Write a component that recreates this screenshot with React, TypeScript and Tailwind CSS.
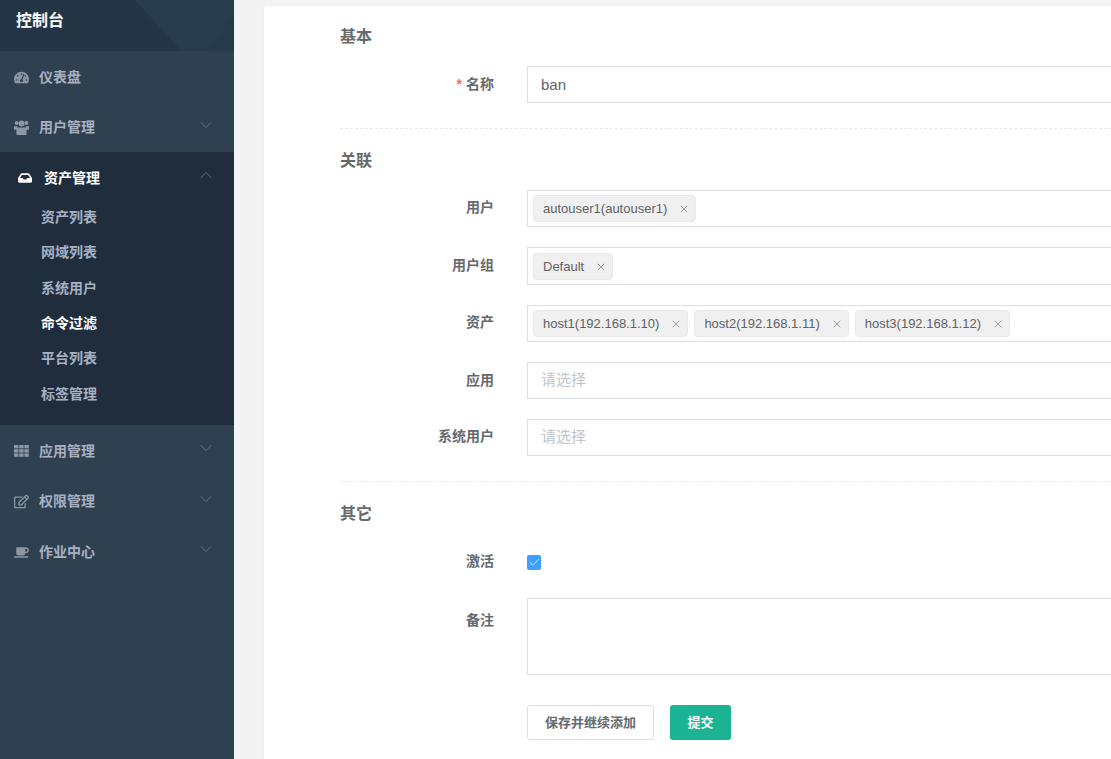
import { ReactNode } from "react";
import { FaTachometerAlt, FaInbox, FaRegEdit, FaCoffee } from "react-icons/fa";
import { LuChevronDown, LuChevronUp, LuCheck, LuX } from "react-icons/lu";

const font = { fontFamily: '"Liberation Sans", "Noto Sans CJK SC", sans-serif' };

function UsersIcon() {
  return (
    <svg width="15" height="15" viewBox="0 0 15 15" fill="currentColor">
      <circle cx="2.6" cy="3" r="2" />
      <circle cx="12.4" cy="3" r="2" />
      <circle cx="7.5" cy="3.6" r="3" />
      <path d="M0 6.200h3.400c-.3 1-.3 2 0 3.500H0z" />
      <path d="M15 6.200h-3.400c.3 1 .3 2 0 3.500H15z" />
      <path d="M3.600 7.500h7.800c1 0 1.200 1 1.200 2.500v4c0 .6-.4 1-1 1H3.400c-.6 0-1-.4-1-1v-4c0-1.500.2-2.500 1.200-2.500z" />
    </svg>
  );
}

function GridIcon() {
  const cells = [0, 1, 2].flatMap((r) => [0, 1, 2].map((c) => ({ r, c })));
  return (
    <svg width="15" height="12" viewBox="0 0 15 12" fill="currentColor">
      {cells.map(({ r, c }) => (
        <rect key={`${r}-${c}`} x={c * 5.2} y={r * 4.2} width="4.4" height="3.4" />
      ))}
    </svg>
  );
}

function MenuItem({ icon, label, arrow = true }: { icon: ReactNode; label: string; arrow?: boolean }) {
  return (
    <div className="flex h-[50.5px] items-center pl-[14px] pr-[18px] pt-[2px] text-[14px] font-bold text-[#a7b1c2]">
      <span className="flex w-[25px] text-[15px] text-[#8d97a3]">{icon}</span>
      <span className="flex-1">{label}</span>
      {arrow && <LuChevronDown className="mb-[6px] text-[20px] text-[#6d7b88]" strokeWidth={1} />}
    </div>
  );
}

function Sidebar() {
  const subs = ["资产列表", "网域列表", "系统用户", "命令过滤", "平台列表", "标签管理"];
  return (
    <aside className="flex w-[234px] shrink-0 flex-col bg-[#2f4050]">
      <div className="relative h-[51px] overflow-hidden bg-[#293c4c] pl-[16px] pt-[11px] text-[16px] font-bold leading-[20px] text-white">
        <svg className="absolute left-0 top-0" width="234" height="51">
          <polygon points="0,0 135,0 181,51 0,51" fill="#243646" />
          <polygon points="234,16 234,51 205,51" fill="#273a4a" />
        </svg>
        <span className="relative">控制台</span>
      </div>
      <MenuItem icon={<FaTachometerAlt />} label="仪表盘" arrow={false} />
      <MenuItem icon={<UsersIcon />} label="用户管理" />
      <div className="h-[273px] bg-[#1f2d3d]">
        <div className="flex h-[50px] items-center pl-[18px] pr-[18px] pt-[2px] text-[14px] font-bold text-white">
          <span className="flex w-[26px] text-[14px]"><FaInbox /></span>
          <span className="flex-1">资产管理</span>
          <LuChevronUp className="mb-[6px] text-[20px] text-[#6d7b88]" strokeWidth={1} />
        </div>
        <div className="-mt-[2px] flex flex-col pl-[41px]">
          {subs.map((s) => (
            <div
              key={s}
              className={`flex h-[35.3px] items-center text-[14px] font-bold ${s === "命令过滤" ? "text-white" : "text-[#a7b1c2]"}`}
            >
              {s}
            </div>
          ))}
        </div>
      </div>
      <MenuItem icon={<GridIcon />} label="应用管理" />
      <MenuItem icon={<FaRegEdit />} label="权限管理" />
      <MenuItem icon={<FaCoffee />} label="作业中心" />
    </aside>
  );
}

function Tag({ text }: { text: string }) {
  return (
    <span className="flex h-[27px] items-center rounded-[4px] border border-[#e9e9eb] bg-[#f0f0f1] pl-[9px] pr-[5px] pt-[1px] text-[13px] text-[#606266]">
      {text}
      <LuX className="ml-[11px] text-[12px] text-[#7f8388]" strokeWidth={1.5} />
    </span>
  );
}

function Field({ label, required, h, mb, labelTop = "mt-[9px]", children }: { label: string; required?: boolean; h: string; mb: string; labelTop?: string; children: ReactNode }) {
  return (
    <div className={`flex ${h} ${mb}`}>
      <label className={`${labelTop} w-[154px] shrink-0 text-right text-[14px] font-bold leading-[18px] text-[#67696d]`}>
        {required && <span className="mr-[4px] text-[#f56c6c]">*</span>}
        {label}
      </label>
      <div className="ml-[33px] w-[700px] shrink-0">{children}</div>
    </div>
  );
}

function SelectBox({ children }: { children: ReactNode }) {
  return (
    <div className="flex h-full items-center gap-[6px] border border-[#dcdfe6] pl-[5px] text-[15px] text-[#c0c4cc]">{children}</div>
  );
}

function SectionTitle({ children, className }: { children: ReactNode; className: string }) {
  return <h3 className={`text-[16px] font-bold leading-[20px] text-[#676a6c] ${className}`}>{children}</h3>;
}

export default function App() {
  return (
    <div className="flex h-[759px] w-[1111px] overflow-hidden bg-[#f3f3f4]" style={font}>
      <Sidebar />
      <main className="ml-[29px] mt-[5px] h-[800px] w-[900px] shrink-0 rounded-t-[4px] border border-[#eef0f5] bg-white pl-[76px]">
        <SectionTitle className="mt-[21px] mb-[19px]">基本</SectionTitle>
        <Field label="名称" required h="h-[37px]" mb="mb-[25px]">
          <div className="flex h-full items-center border border-[#dcdfe6] pl-[13px] pt-[1px] text-[15px] text-[#606266]">ban</div>
        </Field>
        <div className="border-t border-dashed border-[#e7eaec]" />
        <SectionTitle className="mt-[22px] mb-[19px]">关联</SectionTitle>
        <Field label="用户" h="h-[37px]" mb="mb-[20px]" labelTop="mt-[8px]">
          <SelectBox><Tag text="autouser1(autouser1)" /></SelectBox>
        </Field>
        <Field label="用户组" h="h-[38px]" mb="mb-[20px]">
          <SelectBox><Tag text="Default" /></SelectBox>
        </Field>
        <Field label="资产" h="h-[37px]" mb="mb-[20px]" labelTop="mt-[8px]">
          <SelectBox>
            <Tag text="host1(192.168.1.10)" />
            <Tag text="host2(192.168.1.11)" />
            <Tag text="host3(192.168.1.12)" />
          </SelectBox>
        </Field>
        <Field label="应用" h="h-[37px]" mb="mb-[20px]">
          <SelectBox><span className="pl-[8px]">请选择</span></SelectBox>
        </Field>
        <Field label="系统用户" h="h-[37px]" mb="mb-[25px]" labelTop="mt-[8px]">
          <SelectBox><span className="pl-[8px]">请选择</span></SelectBox>
        </Field>
        <div className="border-t border-dashed border-[#e7eaec]" />
        <SectionTitle className="mt-[22px] mb-[31px]">其它</SectionTitle>
        <Field label="激活" h="h-[15px]" mb="mb-[28px]" labelTop="-mt-[3px]">
          <span className="flex h-[15px] w-[14px] items-center justify-center rounded-[2px] bg-[#409eff] text-[13px] text-white">
            <LuCheck strokeWidth={1.5} />
          </span>
        </Field>
        <Field label="备注" h="h-[77px]" mb="mb-[30px]" labelTop="mt-[13px]">
          <div className="h-full border border-[#dcdfe6]" />
        </Field>
        <div className="ml-[187px] flex gap-[16px] text-[13px] font-bold">
          <button className="h-[35px] w-[127px] rounded-[3px] border border-[#dcdfe6] bg-white text-[#67696d]">保存并继续添加</button>
          <button className="h-[35px] w-[61px] rounded-[3px] bg-[#1ab394] text-white">提交</button>
        </div>
      </main>
    </div>
  );
}
